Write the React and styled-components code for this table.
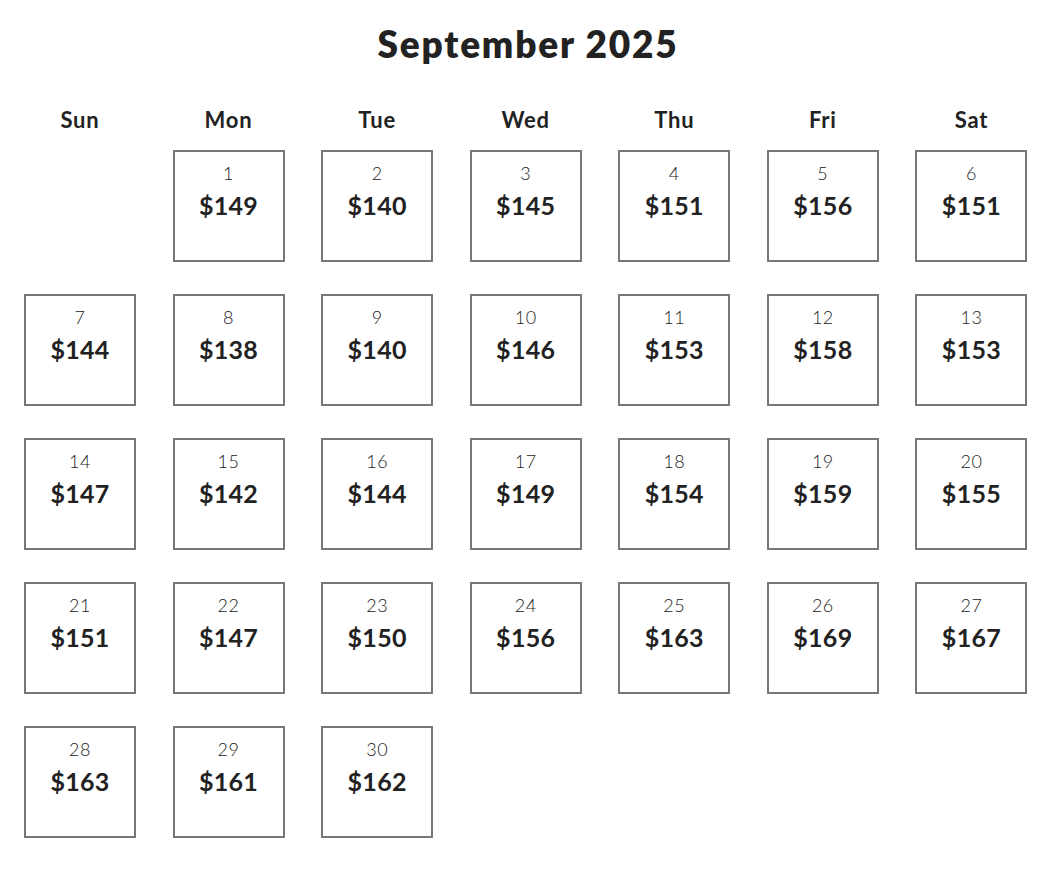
import React from 'react'
import styled, { createGlobalStyle } from 'styled-components'

const GlobalStyle = createGlobalStyle`
  body {
    margin: 8px;
    background: #fff;
    font-family: Lato, "Noto Sans", sans-serif;
    color: #222;
  }
`

const prices = [
  149, 140, 145, 151, 156, 151,
  144, 138, 140, 146, 153, 158, 153,
  147, 142, 144, 149, 154, 159, 155,
  151, 147, 150, 156, 163, 169, 167,
  163, 161, 162,
]

const weekdays = ['Sun', 'Mon', 'Tue', 'Wed', 'Thu', 'Fri', 'Sat']

const Page = styled.div`
  width: 1040px;
`

const Title = styled.h1`
  margin: 0;
  padding-top: 14px;
  text-align: center;
  font-size: 37px;
  font-weight: 800;
  line-height: 44px;
  letter-spacing: 1.8px;
  color: #222;
`

const Grid = styled.div`
  display: grid;
  grid-template-columns: repeat(7, 1fr);
  margin-top: 40px;
`

const DayName = styled.div`
  width: 144px;
  text-align: center;
  font-size: 22px;
  font-weight: 700;
  line-height: 28px;
  letter-spacing: 0.8px;
  color: #222;
`

const Cell = styled.div`
  width: 144px;
  height: 144px;
  box-sizing: border-box;
  padding: 16px;
`

const Box = styled.div`
  width: 112px;
  height: 112px;
  box-sizing: border-box;
  border: 2px solid #777;
  text-align: center;
`

const DayNum = styled.div`
  margin-top: 10px;
  font-size: 18px;
  font-weight: 300;
  line-height: 22px;
  letter-spacing: 0.5px;
  color: #222;
`

const Price = styled.div`
  margin-top: 6px;
  font-size: 25px;
  font-weight: 700;
  line-height: 30px;
  letter-spacing: 0.3px;
  color: #222;
`

const HeaderRow = styled.div`
  display: contents;
`

export default function App() {
  const startOffset = 1
  const cells = []
  for (let i = 0; i < startOffset; i++) cells.push(<Cell key={'e' + i} />)
  prices.forEach((p, i) => {
    cells.push(
      <Cell key={i}>
        <Box>
          <DayNum>{i + 1}</DayNum>
          <Price>${p}</Price>
        </Box>
      </Cell>
    )
  })

  return (
    <Page>
      <GlobalStyle />
      <Title>September 2025</Title>
      <Grid>
        <HeaderRow>
          {weekdays.map((d) => (
            <DayName key={d}>{d}</DayName>
          ))}
        </HeaderRow>
        {cells}
      </Grid>
    </Page>
  )
}
